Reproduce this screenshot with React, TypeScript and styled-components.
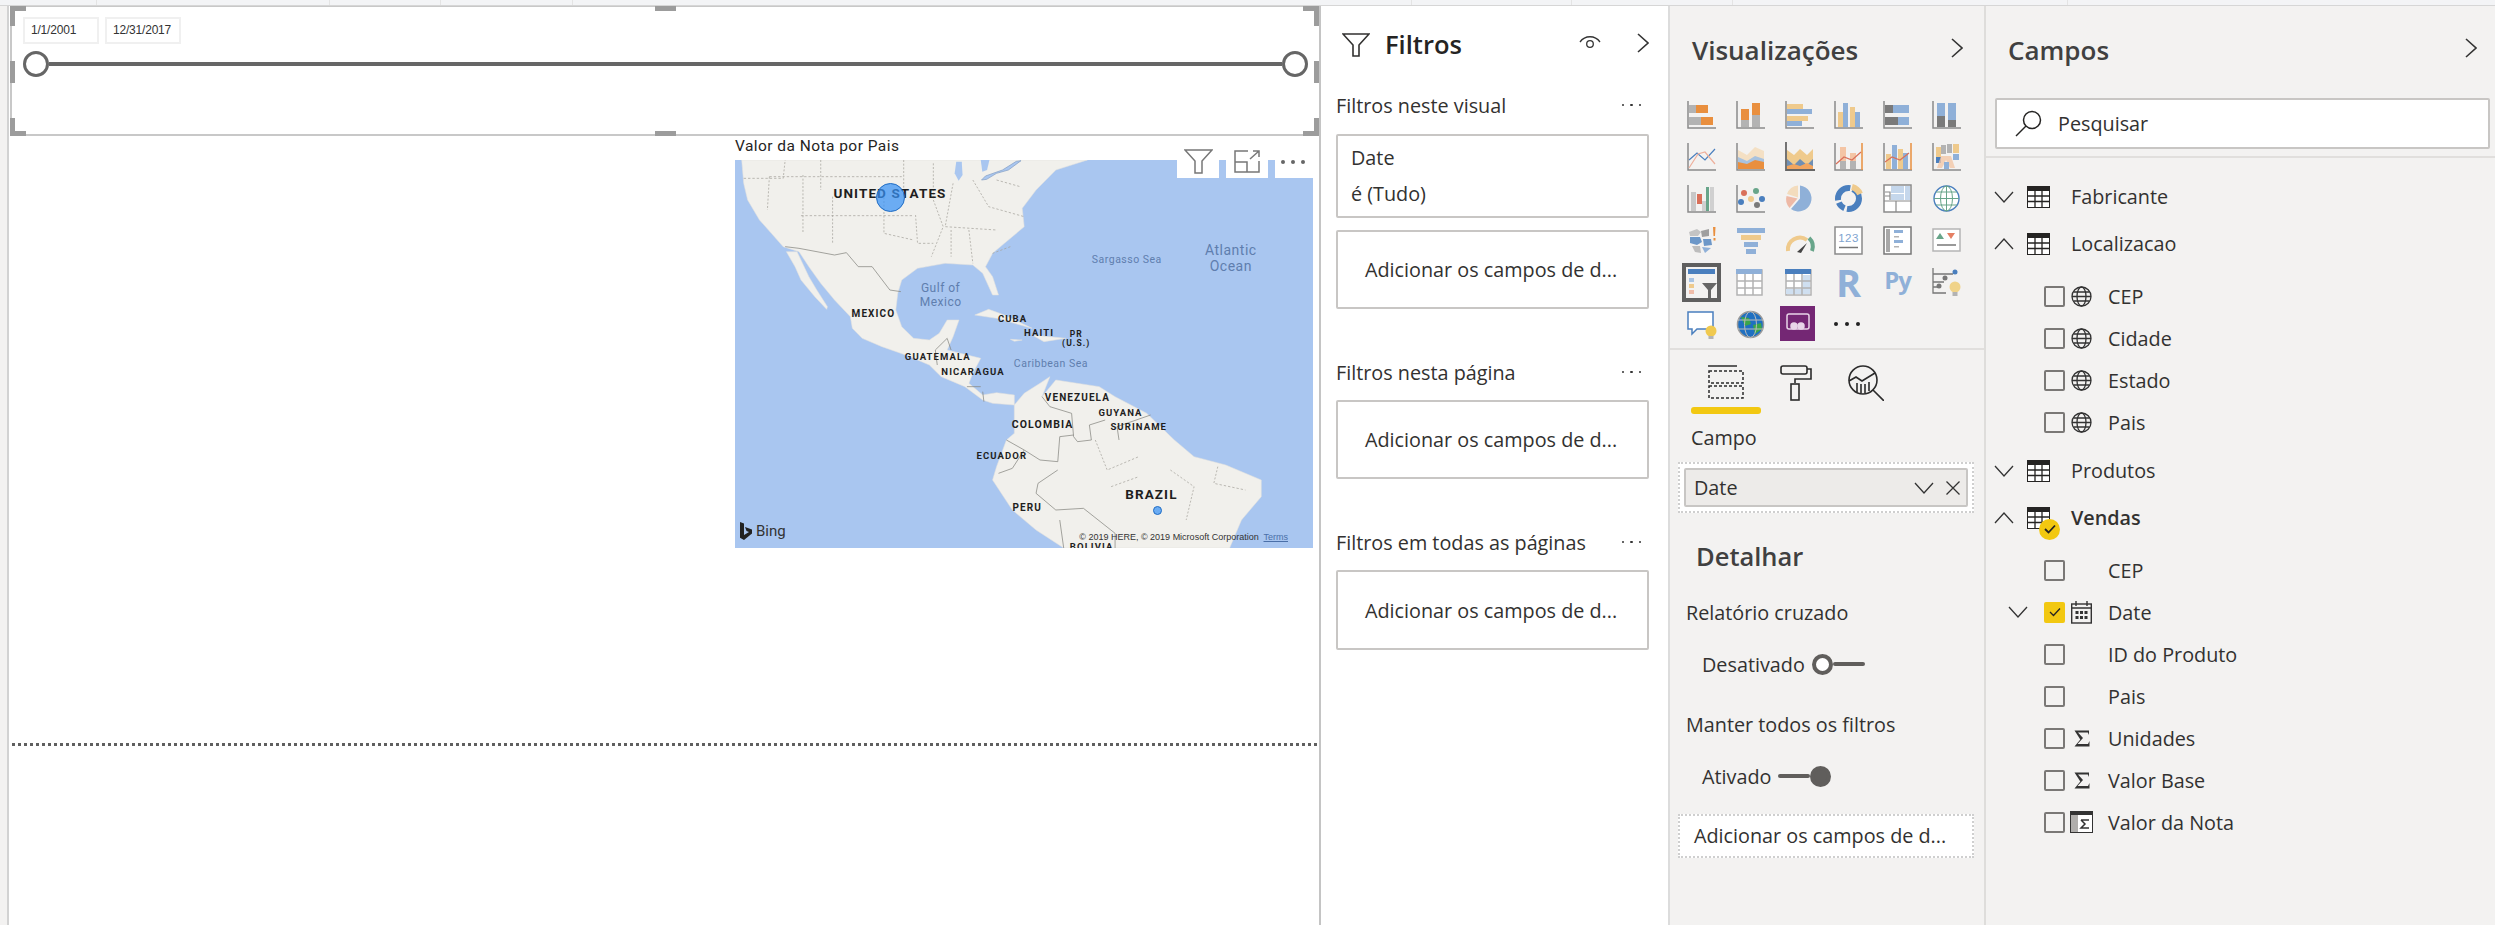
import React from 'react';
import styled, { createGlobalStyle } from 'styled-components';

const UI_FONT = '"Open Sans", "Noto Sans", sans-serif';

const Global = createGlobalStyle`
  html, body {
    margin: 0;
    padding: 0;
    background: #ffffff;
    overflow: hidden;
  }
  * {
    box-sizing: border-box;
  }
`;

const Page = styled.div`
  width: 2495px;
  height: 925px;
  display: flex;
  flex-direction: column;
  font-family: ${UI_FONT};
  font-size: 19.8px;
  color: #323130;
`;

const TopStrip = styled.div`
  height: 6px;
  flex: none;
  display: flex;
  background: #f3f4f6;
  border-bottom: 1px solid #d6d6d6;
`;

const TopCell = styled.div<{ $w: number }>`
  width: ${(p) => p.$w}px;
  border-right: 1px solid #e4e4e4;
`;

const Main = styled.div`
  flex: 1;
  display: flex;
  min-height: 0;
`;

/* report canvas */
const Canvas = styled.section`
  width: 1321px;
  flex: none;
  padding-left: 2px;
  background: #fff;
  border-left: 7px solid #f3f2f1;
  border-right: 2px solid #c4c4c4;
  box-shadow: inset 2px 0 0 #d2d2d2;
`;

const SlicerFrame = styled.div`
  position: relative;
  margin-left: 1px;
  height: 130px;
  padding: 10px 14px 0 11px;
  border: 2px solid #c8c8c8;
  border-right: none;
  border-top-width: 1px;
`;

const Handle = styled.i<{ $pos: string }>`
  position: absolute;
  background: #9c9c9c;
  ${(p) => p.$pos}
`;

const DateRow = styled.div`
  display: flex;
  gap: 6px;
`;

const DateBox = styled.div`
  width: 76px;
  height: 27px;
  padding-left: 6px;
  border: 2px solid #f0f0f0;
  font: 12px/23px 'Liberation Sans', sans-serif;
  letter-spacing: -0.2px;
  color: #333;
`;

const SliderRow = styled.div`
  display: flex;
  align-items: center;
  margin-top: 7px;
  width: 1285px;
`;

const Knob = styled.div`
  width: 26px;
  height: 26px;
  flex: none;
  border: 3px solid #666;
  border-radius: 50%;
`;

const Track = styled.div`
  flex: 1;
  height: 4px;
  background: #666;
`;

const MapVisual = styled.div`
  position: relative;
  margin-left: 726px;
  width: 578px;
`;

const VisualTitle = styled.div`
  height: 24px;
  font: 15.5px/20px Roboto, sans-serif;
  letter-spacing: 0.45px;
  color: #252423;
`;

const MapBox = styled.div`
  position: relative;
  width: 578px;
  height: 388px;
  background: #a9c6f0;
  overflow: hidden;
`;

const MapSvg = styled.svg`
  display: block;
  width: 100%;
  height: 100%;
`;

const MapLabel = styled.span<{ $x: number; $y: number; $size: number; $sea?: boolean }>`
  position: absolute;
  left: ${(p) => (p.$x - 38) / 2.529}px;
  top: ${(p) => (p.$y - 120) / 3}px;
  transform: translate(-50%, -50%);
  text-align: center;
  white-space: pre;
  font-family: Roboto, sans-serif;
  font-size: ${(p) => p.$size}px;
  line-height: 1.15;
  font-weight: ${(p) => (p.$sea ? 400 : 700)};
  letter-spacing: ${(p) => (p.$sea ? 0.5 : 1.1)}px;
  color: ${(p) => (p.$sea ? '#5f7eae' : '#1e1e1e')};
`;

const Bubble = styled.div<{ $x: number; $y: number; $r: number }>`
  position: absolute;
  left: ${(p) => p.$x - p.$r}px;
  top: ${(p) => p.$y - p.$r}px;
  width: ${(p) => p.$r * 2}px;
  height: ${(p) => p.$r * 2}px;
  border-radius: 50%;
  background: rgba(56, 146, 245, 0.72);
  border: 1px solid #1f6cc4;
`;

const BingMark = styled.div`
  position: absolute;
  left: 5px;
  bottom: 8px;
  display: flex;
  align-items: center;
  gap: 4px;
  font: 15px Roboto, sans-serif;
  color: #333;
`;

const Attribution = styled.div`
  position: absolute;
  right: 25px;
  bottom: 6px;
  font: 9px 'Liberation Sans', sans-serif;
  color: #333;
  white-space: pre;
  span {
    color: #4a6fa8;
    text-decoration: underline;
  }
`;

const VisualTools = styled.div`
  position: absolute;
  top: 0;
  right: 0;
  display: flex;
  gap: 7px;
`;

const ToolBtn = styled.div<{ $w: number }>`
  width: ${(p) => p.$w}px;
  height: 42px;
  padding-top: 9px;
  display: flex;
  align-items: center;
  justify-content: center;
  background: #fff;
`;

const DottedLine = styled.div`
  margin: 195px 0 0 3px;
  width: 1307px;
  height: 3px;
  background: repeating-linear-gradient(to right, #5f5f5f 0 3px, transparent 3px 6px);
`;

/* filters pane */
const FilterPane = styled.aside`
  width: 349px;
  flex: none;
  background: #fff;
  padding-left: 15px;
  border-right: 2px solid #dcdcdc;
`;

const FilterHead = styled.div`
  height: 82px;
  display: flex;
  align-items: flex-start;
  padding: 27px 0 0 6px;
`;

const FilterTitle = styled.h2`
  margin: -6px 0 0 15px;
  font-size: 25.5px;
  line-height: 34px;
  font-weight: 600;
  color: #252423;
`;

const HeadRight = styled.div`
  margin-left: auto;
  display: flex;
  gap: 36px;
  align-items: center;
  padding: 0 19px 0 0;
`;

const SectionHead = styled.div<{ $top: number }>`
  margin-top: ${(p) => p.$top}px;
  width: 312px;
  height: 34px;
  display: flex;
  align-items: center;
  justify-content: space-between;
`;

const Dots = styled.span`
  display: flex;
  gap: 6px;
  margin-right: 7px;
  i {
    width: 2.5px;
    height: 2.5px;
    border-radius: 50%;
    background: #333;
  }
`;

const FilterCard = styled.div`
  margin-top: 12px;
  width: 313px;
  height: 84px;
  padding: 4px 13px;
  border: 2px solid #c8c6c4;
  border-radius: 2px;
  line-height: 36px;
`;

const DropCard = styled.div<{ $h: number; $top: number }>`
  margin-top: ${(p) => p.$top}px;
  width: 313px;
  height: ${(p) => p.$h}px;
  display: flex;
  align-items: center;
  padding-left: 27px;
  border: 2px solid #c8c6c4;
  border-radius: 2px;
  white-space: nowrap;
`;

/* visualizations pane */
const VizPane = styled.aside`
  width: 316px;
  flex: none;
  background: #f3f2f1;
  border-right: 2px solid #dedddb;
`;

const PaneHead = styled.div<{ $right: number }>`
  height: 87px;
  display: flex;
  align-items: flex-start;
  justify-content: space-between;
  padding: 27px ${(p) => p.$right}px 0 22px;
`;

const PaneTitle = styled.h2`
  margin: 0;
  font-size: 26px;
  line-height: 34px;
  font-weight: 600;
  color: #404040;
`;

const HeadChevron = styled.div`
  margin-top: 5px;
  display: flex;
`;

const VizGrid = styled.div`
  display: grid;
  grid-template-columns: repeat(6, 49px);
  grid-auto-rows: 42px;
  align-items: center;
  padding-left: 17px;
  height: 257px;
  border-bottom: 2px solid #e1dfdd;
`;

const VizCell = styled.div`
  width: 29px;
  height: 29px;
  position: relative;
`;

const SelectedViz = styled.div`
  position: absolute;
  left: -5px;
  top: -5px;
  width: 39px;
  height: 39px;
  background: #5f5f5f;
  padding: 4px;
`;

const PowerApps = styled.div`
  position: absolute;
  left: -5px;
  top: -4px;
  width: 35px;
  height: 35px;
  background: #742774;
  display: flex;
  align-items: center;
  justify-content: center;
`;

const MoreDots = styled.div`
  display: flex;
  gap: 7px;
  align-items: center;
  height: 100%;
  i {
    width: 4px;
    height: 4px;
    border-radius: 50%;
    background: #222;
  }
`;

const GalleryIcon = styled.svg`
  overflow: visible;
`;

const TabRow = styled.div`
  height: 62px;
  display: flex;
  padding: 15px 0 0 21px;
`;

const Tab = styled.div<{ $active?: boolean; $w: number }>`
  position: relative;
  width: ${(p) => p.$w}px;
  ${(p) =>
    p.$active &&
    `padding-left: 17px;
    &::after {
      content: '';
      position: absolute;
      left: 0;
      top: 42px;
      width: 70px;
      height: 7px;
      border-radius: 3px;
      background: #f2c811;
    }`}
`;

const WellLabel = styled.div`
  height: 50px;
  padding: 14px 0 0 21px;
  line-height: 24px;
`;

const WellOuter = styled.div`
  margin-left: 8px;
  width: 296px;
  height: 51px;
  padding: 4px;
  background: #fff;
  border: 2px dotted #cfcfcf;
`;

const WellField = styled.div`
  height: 39px;
  display: flex;
  align-items: center;
  padding: 0 6px 0 8px;
  background: #edebe9;
  border: 2px solid #c8c6c4;
  border-radius: 2px;
  gap: 12px;
  span {
    margin-right: auto;
  }
`;

const SubTitle = styled.h3`
  margin: 26px 0 0 26px;
  font-size: 25.5px;
  line-height: 34px;
  font-weight: 600;
  color: #404040;
`;

const OptionLabel = styled.div<{ $top: number }>`
  margin: ${(p) => p.$top}px 0 0 16px;
  line-height: 24px;
`;

const ToggleRow = styled.div`
  margin: 27px 0 0 32px;
  height: 24px;
  display: flex;
  align-items: center;
  gap: 7px;
`;

const Toggle = styled.div<{ $on?: boolean }>`
  display: flex;
  align-items: center;
  flex-direction: ${(p) => (p.$on ? 'row-reverse' : 'row')};
  width: 53px;
  i {
    width: 21px;
    height: 21px;
    flex: none;
    border-radius: 50%;
    border: 4px solid #605e5c;
    background: ${(p) => (p.$on ? '#605e5c' : '#fff')};
  }
  b {
    flex: 1;
    height: 4px;
    background: #605e5c;
    border-radius: 2px;
  }
`;

const AddWell = styled.div`
  margin: 26px 0 0 8px;
  width: 296px;
  height: 44px;
  padding-left: 14px;
  line-height: 40px;
  background: #fff;
  border: 2px dotted #cfcfcf;
  white-space: nowrap;
`;

/* fields pane */
const FieldsPane = styled.aside`
  flex: 1;
  background: #f3f2f1;
  min-width: 0;
`;

const SearchBox = styled.div`
  margin-left: 9px;
  width: 495px;
  height: 51px;
  display: flex;
  align-items: center;
  gap: 16px;
  padding-left: 18px;
  background: #fff;
  border: 2px solid #c8c6c4;
  border-radius: 2px;
`;

const SearchWrap = styled.div`
  height: 60px;
  border-bottom: 2px solid #e1dfdd;
  margin-top: 5px;
`;

const FieldList = styled.div`
  padding: 15px 0 0 8px;
`;

const TableRow = styled.div<{ $gap?: number }>`
  height: 47px;
  margin-bottom: ${(p) => p.$gap ?? 0}px;
  display: flex;
  align-items: center;
  position: relative;
`;

const TableIconSlot = styled.div`
  position: relative;
  margin-left: 13px;
  width: 23px;
  height: 22px;
`;

const TableName = styled.span<{ $bold?: boolean }>`
  margin-left: 21px;
  font-weight: ${(p) => (p.$bold ? 600 : 400)};
`;

const TickBadge = styled.div`
  position: absolute;
  left: 12px;
  top: 12px;
  width: 21px;
  height: 21px;
  border-radius: 50%;
  background: #f2c811;
  display: flex;
  align-items: center;
  justify-content: center;
`;

const FieldGroup = styled.div`
  margin-bottom: 4px;
`;

const FieldRow = styled.div`
  height: 42px;
  display: flex;
  align-items: center;
  padding-left: 13px;
`;

const ChevronSlot = styled.div`
  width: 37px;
  display: flex;
  padding-left: 1px;
`;

const Check = styled.div<{ $on?: boolean }>`
  width: 21px;
  height: 21px;
  flex: none;
  display: flex;
  align-items: center;
  justify-content: center;
  border-radius: 2px;
  border: ${(p) => (p.$on ? 'none' : '2px solid #7a7876')};
  background: ${(p) => (p.$on ? '#f2c811' : 'transparent')};
`;

const FieldIconSlot = styled.div`
  width: 23px;
  margin-left: 5px;
  height: 23px;
  display: flex;
  align-items: center;
  justify-content: center;
`;

const FieldName = styled.span`
  margin-left: 15px;
`;

/* small svg parts */
const Chevron = ({ dir }: { dir: 'down' | 'up' | 'right' }) => {
  if (dir === 'right') {
    return (
      <svg width="12" height="20" viewBox="0 0 12 20" fill="none" stroke="#333" strokeWidth="1.6">
        <path d="M1 1l10 9-10 9" />
      </svg>
    );
  }
  return (
    <svg width="20" height="16" viewBox="0 0 20 16" fill="none" stroke="#333" strokeWidth="1.3" style={{ flex: 'none' }}>
      <path d={dir === 'down' ? 'M1 3l9 10 9-10' : 'M1 13l9-10 9 10'} />
    </svg>
  );
};

const FunnelIcon = () => (
  <svg width="28" height="24" viewBox="0 0 28 24" fill="none" stroke="#323130" strokeWidth="1.6">
    <path d="M1 1h26L17 12v11h-6V12z" />
  </svg>
);

const TableGlyph = () => (
  <svg width="23" height="22" viewBox="0 0 23 22">
    <rect x="0.5" y="0.5" width="22" height="21" fill="#fff" stroke="#252423" />
    <rect width="23" height="5" fill="#252423" />
    <path d="M8 5v16M15 5v16M1 10h21M1 15.5h21" stroke="#252423" strokeWidth="1.3" />
  </svg>
);

const GlobeGlyph = () => (
  <svg width="21" height="21" viewBox="0 0 21 21" fill="none" stroke="#333" strokeWidth="1.3">
    <circle cx="10.5" cy="10.5" r="9.5" />
    <ellipse cx="10.5" cy="10.5" rx="4.5" ry="9.5" />
    <path d="M1 10.5h19M2.5 6h16M2.5 15h16" />
  </svg>
);

const CalendarGlyph = () => (
  <svg width="21" height="23" viewBox="0 0 21 23" fill="none" stroke="#333" strokeWidth="1.4">
    <rect x="0.7" y="3" width="19.6" height="19" />
    <path d="M5 0v5M16 0v5M1 7h19" />
    <path d="M4.5 10h3v3h-3zM9 10h3v3H9zM13.5 10h3v3h-3zM4.5 15h3v3h-3zM9 15h3v3H9zM13.5 15h3v3h-3z" fill="#333" stroke="none" />
  </svg>
);

const SigmaGlyph = () => (
  <svg width="16" height="17" viewBox="0 0 16 17">
    <path d="M0.5 0.5H15V5L13.8 2.5H4L9 8 3.5 14H14L15.5 11v5.5H0.5L6.3 9.5z" fill="#333" />
  </svg>
);

const MeasureGlyph = () => (
  <svg width="23" height="22" viewBox="0 0 23 22">
    <rect x="0.5" y="0.5" width="22" height="21" fill="#fff" stroke="#333" />
    <rect width="23" height="4" fill="#333" />
    <rect x="1" y="4" width="7" height="17" fill="#b0aeac" />
    <path d="M11 9h8M19 17h-8l4-4-4-4" fill="none" stroke="#333" strokeWidth="1.5" />
  </svg>
);

const TickMark = ({ width = 1.8 }: { width?: number }) => (
  <svg width="12" height="10" viewBox="0 0 12 10" fill="none" stroke="#252423" strokeWidth={width}>
    <path d="M1 5l3.5 3.5L11 1.5" />
  </svg>
);

const Cross = () => (
  <svg width="14" height="14" viewBox="0 0 14 14" stroke="#333" strokeWidth="1.3">
    <path d="M0.5 0.5l13 13M13.5 0.5l-13 13" />
  </svg>
);

/* visualization gallery icons */
const OR = '#e98f3e';
const GR = '#b3b3b3';
const BL = '#8fb0d8';
const TN = '#efca8c';
const DB = '#4a7fbe';
const DG = '#7a7a7a';
const SL = '#eeb09c';
const GN = '#68a58a';

const Ic = ({ children }: { children: React.ReactNode }) => (
  <GalleryIcon width="29" height="29" viewBox="0 0 29 29">
    {children}
  </GalleryIcon>
);

const Axis = () => <path d="M1 1v27h28" fill="none" stroke="#8a8a8a" strokeWidth="1.5" />;

const R = ({ x, y, w, h, c }: { x: number; y: number; w: number; h: number; c: string }) => (
  <rect x={x} y={y} width={w} height={h} fill={c} />
);

const Frame = () => <rect x="1" y="1" width="27" height="27" fill="#fff" stroke="#8a8a8a" strokeWidth="1.5" />;

const galleryIcons: React.ReactNode[] = [
  <Ic key="0"><Axis /><R x={2} y={5} w={7} h={8} c={GR} /><R x={9} y={5} w={12} h={8} c={OR} /><R x={2} y={17} w={12} h={8} c={GR} /><R x={14} y={17} w={12} h={8} c={OR} /></Ic>,
  <Ic key="1"><Axis /><R x={5} y={20} w={8} h={7} c={GR} /><R x={5} y={9} w={8} h={11} c={OR} /><R x={16} y={15} w={8} h={12} c={GR} /><R x={16} y={3} w={8} h={12} c={OR} /></Ic>,
  <Ic key="2"><Axis /><R x={2} y={4} w={16} h={5} c={TN} /><R x={2} y={9} w={25} h={5} c={BL} /><R x={2} y={16} w={21} h={5} c={TN} /><R x={2} y={21} w={15} h={5} c={BL} /></Ic>,
  <Ic key="3"><Axis /><R x={4} y={12} w={5} h={15} c={TN} /><R x={9} y={3} w={5} h={24} c={BL} /><R x={16} y={7} w={5} h={20} c={TN} /><R x={21} y={12} w={5} h={15} c={BL} /></Ic>,
  <Ic key="4"><Axis /><R x={2} y={5} w={8} h={8} c={DG} /><R x={10} y={5} w={16} h={8} c={BL} /><R x={2} y={17} w={13} h={8} c={DG} /><R x={15} y={17} w={11} h={8} c={BL} /></Ic>,
  <Ic key="5"><Axis /><R x={5} y={3} w={8} h={13} c={BL} /><R x={5} y={16} w={8} h={11} c={DG} /><R x={16} y={3} w={8} h={17} c={BL} /><R x={16} y={20} w={8} h={7} c={DG} /></Ic>,
  <Ic key="6"><Axis /><path d="M2 18l8-7 8 7 10-11" fill="none" stroke={DB} strokeWidth="1.2" /><path d="M2 26l9-14 7-2 10 12" fill="none" stroke={SL} strokeWidth="1.2" /></Ic>,
  <Ic key="7"><Axis /><path d="M2 8l9 5 8-8 9 4v18H2z" fill="#f4e0c4" /><path d="M2 15l9 4 8-5 9 3v10H2z" fill="#a8c2de" /><path d="M2 20l9 2 8-4 9 2v7H2z" fill={OR} /></Ic>,
  <Ic key="8"><path d="M1 0v28h29" fill="none" stroke="#666" strokeWidth="1.8" /><path d="M2 8l7 5 6-6 7 6 6-6v20H2z" fill={TN} /><path d="M2 17l7 6 6-6 7 6 6-6v10H2z" fill="#6f8fb4" /><path d="M2 24l7-2 6 2 7-3 6 3v3H2z" fill="#f2a55e" /></Ic>,
  <Ic key="9"><Axis /><R x={6} y={5} w={6} h={14} c="#f4c5a5" /><R x={6} y={19} w={6} h={8} c={GR} /><R x={16} y={11} w={6} h={8} c="#f4c5a5" /><R x={16} y={19} w={6} h={8} c={GR} /><path d="M2 22l8-7 8 3 9-8" fill="none" stroke="#d9705a" strokeWidth="1.2" /><path d="M28 1v27" stroke={OR} strokeWidth="1.5" /></Ic>,
  <Ic key="10"><Axis /><R x={3} y={12} w={5} h={15} c={TN} /><R x={9} y={3} w={5} h={24} c={BL} /><R x={15} y={7} w={5} h={20} c={TN} /><R x={20} y={11} w={5} h={16} c={BL} /><path d="M2 20l7-5 8 3 9-7" fill="none" stroke="#d9705a" strokeWidth="1.2" /><path d="M28 1v27" stroke={OR} strokeWidth="1.5" /></Ic>,
  <Ic key="11"><Axis /><R x={4} y={5} w={5} h={10} c={TN} /><R x={9} y={3} w={5} h={9} c={GR} /><R x={15} y={2} w={5} h={9} c={GR} /><R x={21} y={2} w={6} h={9} c={TN} /><R x={4} y={15} w={5} h={6} c={DB} /><R x={21} y={12} w={6} h={6} c={BL} /><path d="M9 14l-4 12h5l4-8 4 8h5l-4-12z" fill="#f2c7a8" opacity="0.8" /><R x={12} y={20} w={5} h={7} c={BL} /></Ic>,
  <Ic key="12"><Axis /><R x={4} y={8} w={5} h={19} c="#c8c8c8" /><R x={10} y={10} w={5} h={10} c="#d9705a" /><R x={15} y={17} w={4} h={10} c="#d0d0d0" /><R x={19} y={3} w={3} h={24} c={GN} /><R x={23} y={3} w={4} h={24} c="#d0d0d0" /></Ic>,
  <Ic key="13"><Axis /><circle cx="8" cy="9" r="3" fill="#d9705a" /><circle cx="20" cy="7" r="3" fill={GN} /><circle cx="5" cy="18" r="3" fill={DB} /><circle cx="15" cy="15" r="3" fill={TN} /><circle cx="26" cy="15" r="3" fill={DB} /><circle cx="21" cy="21" r="3" fill={DG} /></Ic>,
  <Ic key="14"><path d="M15 1.5a13 13 0 1 1-9 23.5l9-10.5z" fill={BL} /><path d="M4.5 24a13 13 0 0 1-3-12l11 2.5z" fill="#eeb9a6" /><path d="M2 10A13 13 0 0 1 13 1.5v12z" fill="#f3dcbd" /></Ic>,
  <Ic key="15"><circle cx="14.5" cy="14.5" r="10.5" fill="none" stroke={DB} strokeWidth="6" strokeDasharray="18 2.5 8 2.5 20 2.5 12 0" /><path d="M18 3a12 12 0 0 1 8 7" fill="none" stroke={TN} strokeWidth="6" /></Ic>,
  <Ic key="16"><Frame /><R x={2} y={2} w={5} h={6} c="#fff" /><R x={8} y={2} w={13} h={7} c="#c5d7ec" /><R x={22} y={2} w={5} h={14} c="#c5d7ec" /><R x={8} y={10} w={13} h={6} c="#c5d7ec" /><path d="M2 8h5v8M2 12h5M1 17h27M13 17v11" fill="none" stroke="#8a8a8a" strokeWidth="1.2" /></Ic>,
  <Ic key="17"><circle cx="14.5" cy="14.5" r="12.5" fill="#fff" stroke={DB} strokeWidth="1.4" /><path d="M2 14.5h25" stroke={GN} /><path d="M4 8h21M4 21h21" stroke={GN} /><ellipse cx="14.5" cy="14.5" rx="6" ry="12.5" fill="none" stroke={GN} /><path d="M14.5 2v25" stroke={GN} /></Ic>,
  <Ic key="18"><path d="M2 6l8-3 4 3-3 4-8 0z" fill="#c4c4c4" /><path d="M3 11h10l2 5-5 3-7-2z" fill="#6c97c8" /><path d="M14 5l8-2v7l-7 1z" fill="#9f9f9f" /><path d="M16 13h8l1 6-8 1z" fill="#6c97c8" /><path d="M5 20l8 0 1 7-6-1z" fill="#bdbdbd" /><path d="M15 21l9 1-6 5z" fill="#8fb0d8" /><path d="M26 1h2.5l-.5 9h-1.5zM26.5 12h2v2.5h-2z" fill={OR} /></Ic>,
  <Ic key="19"><R x={1} y={2} w={28} h={5} c={BL} /><R x={5} y={9} w={20} h={5} c={TN} /><R x={8} y={16} w={14} h={5} c={BL} /><R x={10} y={23} w={10} h={5} c={BL} /></Ic>,
  <Ic key="20"><path d="M3 25a12 12 0 0 1 19-11" fill="none" stroke={TN} strokeWidth="4" /><path d="M24 12a12 12 0 0 1 3 13" fill="none" stroke={GN} strokeWidth="4" /><path d="M12 26l10-9-6 10z" fill="#444" /></Ic>,
  <Ic key="21"><Frame /><text x="14.5" y="16" textAnchor="middle" fontFamily="Liberation Sans, sans-serif" fontSize="11.5" letterSpacing="0.5" fill="#7ea3cf">123</text><path d="M5 21.5h19" stroke="#777" strokeWidth="1.5" /></Ic>,
  <Ic key="22"><rect x="1" y="1" width="27" height="27" fill="#fff" stroke="#777" strokeWidth="1.5" /><R x={3} y={3} w={4} h={23} c="#a8a8a8" /><R x={11} y={4} w={9} h={3} c={BL} /><R x={11} y={10} w={5} h={1.5} c={GR} /><R x={11} y={14} w={9} h={3} c={BL} /><R x={11} y={20} w={5} h={1.5} c={GR} /></Ic>,
  <Ic key="23"><rect x="1" y="3" width="27" height="22" fill="#fff" stroke="#b5b5b5" strokeWidth="1.5" /><path d="M8 7l4 6H4z" fill={GN} /><path d="M15 7h8l-4 6z" fill="#e57f63" /><path d="M5 19h19" stroke="#777" strokeWidth="1.5" /></Ic>,
  <SelectedViz key="24"><svg width="31" height="31" viewBox="0 0 31 31"><R x={0} y={0} w={31} h={31} c="#f3f2f1" /><R x={2} y={2} w={27} h={5} c={DB} /><R x={3} y={11} w={5} h={4} c="#a9c4e4" /><R x={3} y={17} w={5} h={4} c={TN} /><R x={3} y={23} w={5} h={4} c="#f0bdaa" /><path d="M16 16h15l-6 7v8h-3v-8z" fill="#666" /></svg></SelectedViz>,
  <Ic key="25"><rect x="1" y="2" width="25" height="25" fill="#fff" stroke={GR} strokeWidth="1.5" /><R x={0} y={1} w={26} h={5} c={BL} /><path d="M9 6v21M17 6v21M1 13h25M1 20h25" stroke={GR} strokeWidth="1.5" /></Ic>,
  <Ic key="26"><rect x="1" y="2" width="25" height="25" fill="#fff" stroke={GR} strokeWidth="1.5" /><R x={0} y={1} w={26} h={5} c={DB} /><R x={18} y={7} w={7} h={19} c="#cfdff0" /><R x={1} y={21} w={24} h={5} c="#cfdff0" /><path d="M9 6v21M17 6v21M1 13h25M1 20h25" stroke={GR} strokeWidth="1.5" /></Ic>,
  <Ic key="27"><text x="14.5" y="29" textAnchor="middle" fontFamily="Open Sans, sans-serif" fontWeight="700" fontSize="38" fill="#8fb0d8">R</text></Ic>,
  <Ic key="28"><text x="14.5" y="21" textAnchor="middle" fontFamily="Open Sans, sans-serif" fontWeight="700" fontSize="24" letterSpacing="-1" fill="#8fb0d8">Py</text></Ic>,
  <Ic key="29"><path d="M1 0v25h13M1 6h20M1 14h11M1 19h6" fill="none" stroke="#777" strokeWidth="1.3" /><circle cx="23" cy="4" r="2.5" fill={DB} /><circle cx="13" cy="10" r="2.5" fill="#777" /><circle cx="7" cy="18" r="2.5" fill="#777" /><circle cx="23" cy="19" r="5.5" fill="#f0d389" /><R x={20.5} y={24} w={5} h={4} c={GR} /></Ic>,
  <Ic key="30"><path d="M1 2h25v17H10l-5 5v-5H1z" fill="#fff" stroke={DB} strokeWidth="1.5" /><circle cx="24" cy="21" r="5.5" fill="#f0c94f" /><R x={21.5} y={26} w={5} h={3} c={GR} /></Ic>,
  <Ic key="31"><circle cx="14.5" cy="14.5" r="13" fill="#1f70c1" stroke="#999" strokeWidth="1.5" /><path d="M5 7l8 1 2 6-6 2zM17 15l8-2 1 6-7 5z" fill="#3ba64a" /><path d="M14.5 1.5a6 13 0 0 1 0 26 6 13 0 0 1 0-26M2 10h25M2 19h25" fill="none" stroke="#bbb" /></Ic>,
  <PowerApps key="32"><svg width="24" height="20" viewBox="0 0 24 20" fill="none" stroke="#e8d5e8" strokeWidth="1.5"><rect x="1" y="1" width="22" height="15" rx="2" /><circle cx="8" cy="13" r="3" fill="#e8d5e8" /><circle cx="15" cy="13" r="3" fill="#e8d5e8" /></svg></PowerApps>,
  <MoreDots key="33"><i /><i /><i /></MoreDots>,
];

const mapLabels = [
  { t: 'UNITED STATES', x: 430, y: 223, s: 13.5 },
  { t: 'MEXICO', x: 388, y: 582, s: 10 },
  { t: 'CUBA', x: 740, y: 596, s: 9.5 },
  { t: 'HAITI', x: 807, y: 639, s: 9.5 },
  { t: 'PR\n(U.S.)', x: 901, y: 659, s: 8.5 },
  { t: 'GUATEMALA', x: 551, y: 712, s: 9.5 },
  { t: 'NICARAGUA', x: 640, y: 755, s: 9.5 },
  { t: 'VENEZUELA', x: 904, y: 834, s: 10 },
  { t: 'GUYANA', x: 1013, y: 878, s: 9.5 },
  { t: 'SURINAME', x: 1059, y: 921, s: 9.5 },
  { t: 'COLOMBIA', x: 816, y: 914, s: 10.5 },
  { t: 'ECUADOR', x: 713, y: 1007, s: 9.5 },
  { t: 'PERU', x: 777, y: 1165, s: 10 },
  { t: 'BRAZIL', x: 1091, y: 1126, s: 13.5 },
  { t: 'BOLIVIA', x: 940, y: 1282, s: 9.5 },
];

const seaLabels = [
  { t: 'Sargasso Sea', x: 1029, y: 420, s: 10.5 },
  { t: 'Atlantic\nOcean', x: 1292, y: 414, s: 14 },
  { t: 'Gulf of\nMexico', x: 558, y: 529, s: 12 },
  { t: 'Caribbean Sea', x: 837, y: 733, s: 10.5 },
];

// traced over the reference, in zoom-crop coordinates
const MapDrawing = () => (
  <MapSvg viewBox="38 120 1463 1164" preserveAspectRatio="none">
    <rect x="38" y="120" width="1463" height="1164" fill="#a9c6f0" />
    <g fill="#f1f0ec" stroke="#e3e2dd" strokeWidth="1.5">
      <path d="M55 120L60 190L70 240L100 300L130 340L160 380L200 395L225 440L255 490L290 540L330 590L335 625L360 655L410 680L470 705L530 735L560 770L620 800L665 840L690 850L745 855L745 825L700 818L665 825L630 790L640 760L660 715L575 690L590 650L605 600L575 600L555 640L530 660L490 655L460 620L445 570L450 520L460 480L500 445L570 430L640 435L665 460L690 525L705 525L690 470L672 440L690 400L720 370L770 320L765 265L800 210L850 150L930 120Z" />
      <path d="M168 395L190 440L205 480L240 530L270 568L272 560L245 510L225 470L205 420L195 395Z" />
      <path d="M745 855L770 820L810 790L835 770L815 830L850 780L960 800L1000 830L1080 880L1150 960L1200 1010L1280 1035L1370 1080L1370 1130L1320 1200L1290 1284L870 1284L800 1230L740 1170L690 1080L700 1040L725 960L745 940Z" />
      <path d="M645 585L680 568L720 585L790 625L745 610L700 595Z" />
      <path d="M790 645L875 655L820 665Z" />
      <path d="M735 658L765 660L745 664Z" />
    </g>
    <g fill="#a9c6f0" stroke="#86a0c4" strokeWidth="2">
      <path d="M598 125L612 125L614 165L604 182L594 160Z" stroke="none" />
      <path d="M662 180L675 178L700 160L730 150L762 122L750 124L715 150L672 168Z" />
      <path d="M660 120L682 120L676 150L664 155Z" stroke="none" />
    </g>
    <g fill="none" stroke="#85847f" strokeWidth="2">
      <path d="M165 380L200 385L290 405L320 398L350 440L385 440L430 510L458 515" />
      <path d="M545 690L575 655L585 690M550 735L545 690" />
      <path d="M815 830L835 860L890 880L895 950L905 965L940 960L935 915L975 900M1010 960L1005 920L1090 885M725 960L770 990L810 1020L855 1025L860 950L895 945M705 1060L740 1045L770 990M855 1050L805 1090L800 1120L850 1170L920 1165L1000 1240L1000 1284M870 1284L860 1200" />
      <path d="M625 800L660 800M665 815L668 845" />
    </g>
    <g fill="none" stroke="#a5a39c" strokeWidth="2" strokeDasharray="6 5">
      <path d="M125 170H460M60 175H160L165 120M255 120V210M125 170L120 270M210 165V340M285 230V370M205 287H490M415 210V340L490 360M465 120V210M540 130V240L565 320L535 410M495 285L500 370H540M590 190L570 320L700 330M640 180L680 260L770 290M700 180L760 200M585 330V410M630 330L640 430M735 380L690 400" />
      <path d="M950 960L980 1050L1060 1010M1140 1050L1200 1100L1180 1200M1260 1040L1250 1090L1330 1110M990 1100L1060 1070" />
    </g>
  </MapSvg>
);

const BingLogo = () => (
  <svg width="12" height="18" viewBox="0 0 12 18">
    <path d="M0 0l4 1.4v11.5l5-2.9-2.5-1.1-1.500-3.800 7 2.500v4L4 18l-4-2.200z" fill="#222" />
  </svg>
);

const FieldsTabIcon = () => (
  <svg width="36" height="36" viewBox="0 0 36 36" fill="none" stroke="#2b2b2b" strokeWidth="1.5">
    <path d="M0 1h29" />
    <rect x="1" y="6" width="34" height="12" strokeDasharray="3 2" />
    <rect x="1" y="21" width="34" height="12" strokeDasharray="3 2" />
  </svg>
);

const RollerIcon = () => (
  <svg width="33" height="36" viewBox="0 0 33 36" fill="none" stroke="#2b2b2b" strokeWidth="1.6">
    <rect x="1" y="1" width="26" height="8" rx="2" />
    <path d="M27 4h4v10H15v4" />
    <rect x="11" y="19" width="8" height="16" />
  </svg>
);

const AnalyticsIcon = () => (
  <svg width="36" height="36" viewBox="0 0 36 36" fill="none" stroke="#2b2b2b" strokeWidth="1.6">
    <circle cx="15" cy="15" r="14" />
    <path d="M1 16l7-4 6 4 13-8M25 25l11 11" />
    <path d="M9 18v9M13 19v9M17 19v9M21 17v9" />
  </svg>
);

const EyeIcon = () => (
  <svg width="22" height="16" viewBox="0 0 22 16" fill="none" stroke="#333" strokeWidth="1.3">
    <path d="M1 7C6 0 16 0 21 7" />
    <circle cx="11" cy="9" r="3.3" />
  </svg>
);

const MagnifierIcon = () => (
  <svg width="27" height="27" viewBox="0 0 27 27" fill="none" stroke="#252423" strokeWidth="1.5">
    <circle cx="17" cy="10" r="8.5" />
    <path d="M11 16L1 26" />
  </svg>
);

const SectionDots = () => (
  <Dots>
    <i />
    <i />
    <i />
  </Dots>
);

const App = () => (
  <Page>
    <Global />
    <TopStrip>
      <TopCell $w={97} />
      <TopCell $w={233} />
      <TopCell $w={111} />
      <TopCell $w={132} />
      <TopCell $w={839} />
      <TopCell $w={160} />
      <TopCell $w={161} />
      <TopCell $w={335} />
    </TopStrip>
    <Main>
      <Canvas>
        <SlicerFrame>
          <Handle $pos="left:-2px;top:-1px;width:16px;height:5px;" />
          <Handle $pos="left:-2px;top:-1px;width:5px;height:20px;" />
          <Handle $pos="left:-2px;bottom:-2px;width:16px;height:5px;" />
          <Handle $pos="left:-2px;bottom:-2px;width:5px;height:18px;" />
          <Handle $pos="left:-2px;top:54px;width:5px;height:22px;" />
          <Handle $pos="left:643px;top:-1px;width:21px;height:5px;" />
          <Handle $pos="left:643px;bottom:-2px;width:21px;height:5px;" />
          <Handle $pos="right:0;top:-1px;width:16px;height:5px;" />
          <Handle $pos="right:0;top:-1px;width:5px;height:20px;" />
          <Handle $pos="right:0;bottom:-2px;width:16px;height:5px;" />
          <Handle $pos="right:0;bottom:-2px;width:5px;height:18px;" />
          <Handle $pos="right:0;top:54px;width:5px;height:22px;" />
          <DateRow>
            <DateBox>1/1/2001</DateBox>
            <DateBox>12/31/2017</DateBox>
          </DateRow>
          <SliderRow>
            <Knob />
            <Track />
            <Knob />
          </SliderRow>
        </SlicerFrame>
        <MapVisual>
          <VisualTitle>Valor da Nota por Pais</VisualTitle>
          <MapBox>
            <MapDrawing />
            {mapLabels.map((l) => (
              <MapLabel key={l.t} $x={l.x} $y={l.y} $size={l.s}>
                {l.t}
              </MapLabel>
            ))}
            {seaLabels.map((l) => (
              <MapLabel key={l.t} $sea $x={l.x} $y={l.y} $size={l.s}>
                {l.t}
              </MapLabel>
            ))}
            <Bubble $x={155} $y={37} $r={14.5} />
            <Bubble $x={422} $y={350} $r={4.5} />
            <BingMark>
              <BingLogo />
              Bing
            </BingMark>
            <Attribution>
              © 2019 HERE, © 2019 Microsoft Corporation  <span>Terms</span>
            </Attribution>
          </MapBox>
          <VisualTools>
            <ToolBtn $w={42}>
              <svg width="29" height="25" viewBox="0 0 29 25" fill="none" stroke="#777" strokeWidth="1.5">
                <path d="M1 1h27L18 12v12h-7V12z" />
              </svg>
            </ToolBtn>
            <ToolBtn $w={42}>
              <svg width="26" height="23" viewBox="0 0 26 23" fill="none" stroke="#777" strokeWidth="1.5">
                <path d="M14 1H1v21h24V11M1 12h12v10M16 9l9-8M19 1h6v6" />
              </svg>
            </ToolBtn>
            <ToolBtn $w={38}>
              <svg width="28" height="6" viewBox="0 0 28 6" fill="#666">
                <circle cx="3" cy="3" r="2" />
                <circle cx="13" cy="3" r="2" />
                <circle cx="23" cy="3" r="2" />
              </svg>
            </ToolBtn>
          </VisualTools>
        </MapVisual>
        <DottedLine />
      </Canvas>

      <FilterPane>
        <FilterHead>
          <FunnelIcon />
          <FilterTitle>Filtros</FilterTitle>
          <HeadRight>
            <EyeIcon />
            <Chevron dir="right" />
          </HeadRight>
        </FilterHead>
        <SectionHead $top={0}>
          Filtros neste visual
          <SectionDots />
        </SectionHead>
        <FilterCard>
          Date
          <br />é (Tudo)
        </FilterCard>
        <DropCard $h={79} $top={12}>Adicionar os campos de d...</DropCard>
        <SectionHead $top={46}>
          Filtros nesta página
          <SectionDots />
        </SectionHead>
        <DropCard $h={79} $top={11}>Adicionar os campos de d...</DropCard>
        <SectionHead $top={46}>
          Filtros em todas as páginas
          <SectionDots />
        </SectionHead>
        <DropCard $h={80} $top={11}>Adicionar os campos de d...</DropCard>
      </FilterPane>

      <VizPane>
        <PaneHead $right={21}>
          <PaneTitle>Visualizações</PaneTitle>
          <HeadChevron>
            <Chevron dir="right" />
          </HeadChevron>
        </PaneHead>
        <VizGrid>
          {galleryIcons.map((icon, i) => (
            <VizCell key={i}>{icon}</VizCell>
          ))}
        </VizGrid>
        <TabRow>
          <Tab $active $w={89}>
            <FieldsTabIcon />
          </Tab>
          <Tab $w={68}>
            <RollerIcon />
          </Tab>
          <Tab $w={40}>
            <AnalyticsIcon />
          </Tab>
        </TabRow>
        <WellLabel>Campo</WellLabel>
        <WellOuter>
          <WellField>
            <span>Date</span>
            <Chevron dir="down" />
            <Cross />
          </WellField>
        </WellOuter>
        <SubTitle>Detalhar</SubTitle>
        <OptionLabel $top={28}>Relatório cruzado</OptionLabel>
        <ToggleRow>
          Desativado
          <Toggle>
            <i />
            <b />
          </Toggle>
        </ToggleRow>
        <OptionLabel $top={37}>Manter todos os filtros</OptionLabel>
        <ToggleRow>
          Ativado
          <Toggle $on>
            <i />
            <b />
          </Toggle>
        </ToggleRow>
        <AddWell>Adicionar os campos de d...</AddWell>
      </VizPane>

      <FieldsPane>
        <PaneHead $right={18}>
          <PaneTitle>Campos</PaneTitle>
          <HeadChevron>
            <Chevron dir="right" />
          </HeadChevron>
        </PaneHead>
        <SearchWrap>
          <SearchBox>
            <MagnifierIcon />
            Pesquisar
          </SearchBox>
        </SearchWrap>
        <FieldList>
          <TableRow>
            <Chevron dir="down" />
            <TableIconSlot>
              <TableGlyph />
            </TableIconSlot>
            <TableName>Fabricante</TableName>
          </TableRow>
          <TableRow $gap={8}>
            <Chevron dir="up" />
            <TableIconSlot>
              <TableGlyph />
            </TableIconSlot>
            <TableName>Localizacao</TableName>
          </TableRow>
          <FieldGroup>
            {['CEP', 'Cidade', 'Estado', 'Pais'].map((n) => (
              <FieldRow key={n}>
                <ChevronSlot />
                <Check />
                <FieldIconSlot>
                  <GlobeGlyph />
                </FieldIconSlot>
                <FieldName>{n}</FieldName>
              </FieldRow>
            ))}
          </FieldGroup>
          <TableRow>
            <Chevron dir="down" />
            <TableIconSlot>
              <TableGlyph />
            </TableIconSlot>
            <TableName>Produtos</TableName>
          </TableRow>
          <TableRow $gap={8}>
            <Chevron dir="up" />
            <TableIconSlot>
              <TableGlyph />
              <TickBadge>
                <TickMark />
              </TickBadge>
            </TableIconSlot>
            <TableName $bold>Vendas</TableName>
          </TableRow>
          <FieldGroup>
            <FieldRow>
              <ChevronSlot />
              <Check />
              <FieldIconSlot />
              <FieldName>CEP</FieldName>
            </FieldRow>
            <FieldRow>
              <ChevronSlot>
                <Chevron dir="down" />
              </ChevronSlot>
              <Check $on>
                <TickMark width={1.3} />
              </Check>
              <FieldIconSlot>
                <CalendarGlyph />
              </FieldIconSlot>
              <FieldName>Date</FieldName>
            </FieldRow>
            <FieldRow>
              <ChevronSlot />
              <Check />
              <FieldIconSlot />
              <FieldName>ID do Produto</FieldName>
            </FieldRow>
            <FieldRow>
              <ChevronSlot />
              <Check />
              <FieldIconSlot />
              <FieldName>Pais</FieldName>
            </FieldRow>
            <FieldRow>
              <ChevronSlot />
              <Check />
              <FieldIconSlot>
                <SigmaGlyph />
              </FieldIconSlot>
              <FieldName>Unidades</FieldName>
            </FieldRow>
            <FieldRow>
              <ChevronSlot />
              <Check />
              <FieldIconSlot>
                <SigmaGlyph />
              </FieldIconSlot>
              <FieldName>Valor Base</FieldName>
            </FieldRow>
            <FieldRow>
              <ChevronSlot />
              <Check />
              <FieldIconSlot>
                <MeasureGlyph />
              </FieldIconSlot>
              <FieldName>Valor da Nota</FieldName>
            </FieldRow>
          </FieldGroup>
        </FieldList>
      </FieldsPane>
    </Main>
  </Page>
);

export default App;
